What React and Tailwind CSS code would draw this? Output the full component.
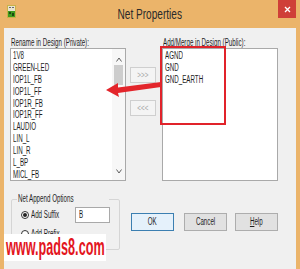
import React from "react";

const T = ({ children, className = "" }) => (
  <span className={"inline-block whitespace-nowrap origin-left scale-x-[0.62] " + className}>{children}</span>
);

function Btn({ children, def }) {
  return (
    <div
      className={
        def
          ? "w-[43px] h-[18px] border border-[#3c7fb1] bg-[#e5f1fb] flex items-center justify-center"
          : "w-[43px] h-[18px] border border-[#adadad] bg-[#e1e1e1] flex items-center justify-center"
      }
    >
      <span className="inline-block whitespace-nowrap origin-center scale-x-[0.62] text-[10px] leading-none text-[#1e1e1e]">
        {children}
      </span>
    </div>
  );
}

function MoveBtn({ children }) {
  return (
    <div className="w-[26px] h-[16px] border border-[#cfcfcf] bg-[#f4f4f4] flex items-center justify-center">
      <span className="inline-block whitespace-nowrap origin-center scale-x-[0.7] text-[9px] leading-none text-[#a8a8a8]">
        {children}
      </span>
    </div>
  );
}

export default function App() {
  const left = ["1V8", "GREEN-LED", "IOP1L_FB", "IOP1L_FF", "IOP1R_FB", "IOP1R_FF", "LAUDIO", "LIN_L", "LIN_R", "L_BP", "MICL_FB"];
  const right = ["AGND", "GND", "GND_EARTH"];
  return (
    <div className="relative w-[300px] h-[269px] overflow-hidden bg-[#ebb46a] flex flex-col font-['Liberation_Sans',Arial,sans-serif] text-[#1e1e1e]">
      {/* title bar */}
      <div className="relative h-[28px] shrink-0 flex items-center justify-center">
        <svg className="absolute left-[7px] top-[5px]" width="9" height="13" viewBox="0 0 9 13">
          <rect x="0" y="0" width="9" height="13" fill="#c9b24a" />
          <rect x="1" y="1" width="7" height="5" fill="#e9e4cf" />
          <rect x="2" y="2" width="2" height="1" fill="#6b6b6b" />
          <rect x="5" y="2" width="2" height="1" fill="#6b6b6b" />
          <rect x="1" y="6" width="7" height="6" fill="#3f9a1f" />
          <rect x="2" y="7" width="2" height="2" fill="#1d4a10" />
          <rect x="5" y="8" width="2" height="3" fill="#1d4a10" />
        </svg>
        <span className="inline-block whitespace-nowrap origin-center scale-x-[0.72] text-[14px] leading-none text-[#2a2a2a]">
          Net Properties
        </span>
        <div className="absolute right-[4px] top-0 w-[18px] h-[18px] bg-[#cf3f38] flex items-center justify-center">
          <svg width="7" height="7" viewBox="0 0 7 7">
            <path d="M1 1 L6 6 M6 1 L1 6" stroke="#ffffff" strokeWidth="1.3" />
          </svg>
        </div>
      </div>

      {/* body */}
      <div className="flex-1 ml-[4px] mr-[4px] bg-[#f0f0f0] flex flex-col">
        <div className="flex items-start pt-[9px]">
          {/* left column */}
          <div className="ml-[6px] w-[116px] flex flex-col">
            <div className="h-[11px] text-[10px] leading-[11px] pl-[1px]">
              <T>Rename in Design (Private):</T>
            </div>
            <div className="h-[133px] border border-[#a9a9a9] bg-white flex">
              <div className="flex-1 overflow-hidden pt-[1px] pl-[2px] flex flex-col">
                {left.map((n) => (
                  <div key={n} className="h-[11.9px] text-[10px] leading-[11.9px]">
                    <T>{n}</T>
                  </div>
                ))}
              </div>
              <div className="w-[13px] bg-[#f7f7f7] flex flex-col items-center pt-[8px] pb-[6px]">
                <svg width="6" height="5" viewBox="0 0 6 5">
                  <path d="M0.5 4.5 L3 1 L5.5 4.5" fill="none" stroke="#606060" strokeWidth="1" />
                </svg>
                <div className="mt-[3px] w-[9px] h-[20px] bg-[#cdcdcd]" />
                <div className="flex-1" />
                <svg width="6" height="5" viewBox="0 0 6 5">
                  <path d="M0.5 0.5 L3 4 L5.5 0.5" fill="none" stroke="#606060" strokeWidth="1" />
                </svg>
              </div>
            </div>
          </div>

          {/* middle column */}
          <div className="w-[36px] pt-[30px] pl-[4px] flex flex-col gap-[17px]">
            <MoveBtn>&gt;&gt;&gt;</MoveBtn>
            <MoveBtn>&lt;&lt;&lt;</MoveBtn>
          </div>

          {/* right column */}
          <div className="w-[116px] flex flex-col">
            <div className="h-[11px] text-[10px] leading-[11px] pl-[1px]">
              <T>Add/Merge in Design (Public):</T>
            </div>
            <div className="h-[133px] border border-[#a9a9a9] bg-white pt-[1px] pl-[2px] flex flex-col overflow-hidden">
              {right.map((n) => (
                <div key={n} className="h-[11.9px] text-[10px] leading-[11.9px]">
                  <T>{n}</T>
                </div>
              ))}
            </div>
          </div>
        </div>

        {/* bottom */}
        <div className="flex items-start">
          <fieldset className="mt-[12px] ml-[7px] w-[109px] h-[57px] border border-[#d5d5d5] rounded-[2px] px-0">
            <legend className="ml-[5px] px-[1px] text-[10px] leading-[12px]">
              <T>Net Append Options</T>
            </legend>
            <div className="mt-[2px] h-[16px] flex items-center pl-[9px]">
              <div className="w-[8px] h-[8px] rounded-full border border-[#333] bg-white flex items-center justify-center">
                <div className="w-[4px] h-[4px] rounded-full bg-[#222]" />
              </div>
              <div className="ml-[2px] w-[44px] text-[10px] leading-none">
                <T>Add Suffix</T>
              </div>
              <div className="w-[35px] h-[16px] border border-[#a9a9a9] bg-white pl-[3px] flex items-center text-[10px] leading-none">
                <T>B</T>
              </div>
            </div>
            <div className="mt-[2px] h-[18px] flex items-center pl-[9px]">
              <div className="w-[8px] h-[8px] rounded-full border border-[#333] bg-white" />
              <div className="ml-[2px] text-[10px] leading-none">
                <T>Add Prefix</T>
              </div>
            </div>
          </fieldset>
          <div className="mt-[32px] ml-[11px] flex">
            <Btn def>OK</Btn>
            <div className="ml-[10px]">
              <Btn>Cancel</Btn>
            </div>
            <div className="ml-[8px]">
              <Btn>
                <span className="underline">H</span>elp
              </Btn>
            </div>
          </div>
        </div>
      </div>

      {/* red annotation overlay */}
      <svg className="absolute left-0 top-0 pointer-events-none" width="300" height="269" viewBox="0 0 300 269">
        <rect x="161" y="47" width="64" height="77" fill="none" stroke="#e1232a" strokeWidth="2" />
        <polygon
          points="106,90 118,83 118,87.5 161,82 161,87 118,93 119,97"
          fill="#e3252b"
        />
      </svg>

      {/* watermark */}
      <div className="absolute left-[4px] top-[234px] w-[102px] h-[27px] bg-white pl-[2px]">
        <span className="inline-block whitespace-nowrap origin-left scale-x-[0.55] text-[23px] leading-[27px] font-bold text-[#e3151d]">
          www.pads8.com
        </span>
      </div>
    </div>
  );
}
